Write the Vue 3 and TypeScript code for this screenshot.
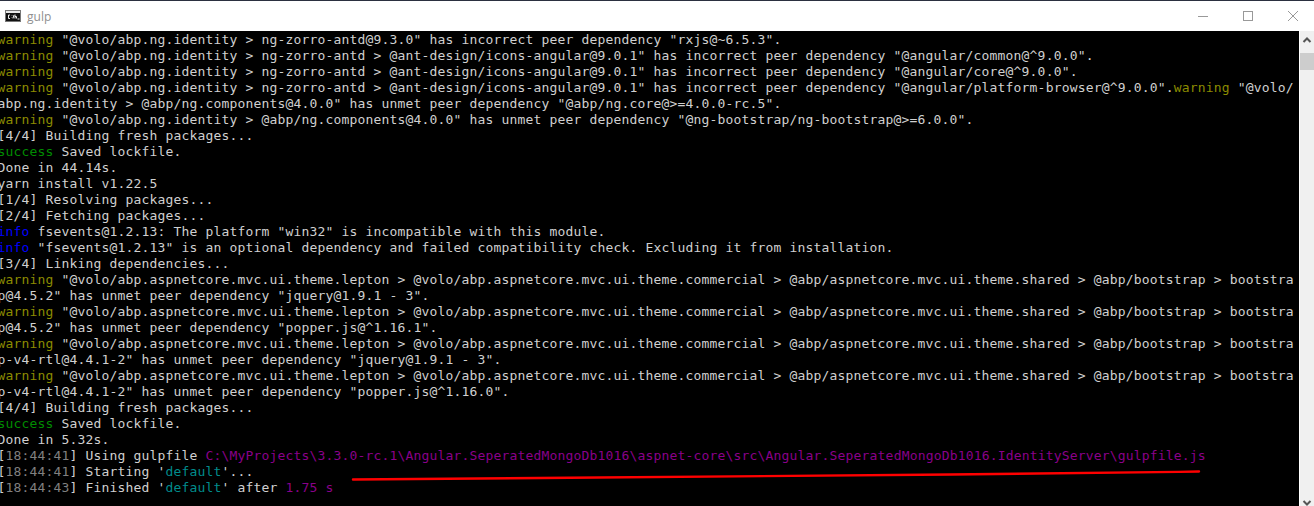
<script setup lang="ts">
type Seg = [string, string?]
const W = 'warn', P = 'purple', T = 'teal', G = 'green', B = 'blue', D = 'dim'
const w = (rest: string): Seg[] => [['warning', W], [' ' + rest]]
const lep = ' "@volo/abp.aspnetcore.mvc.ui.theme.lepton > @volo/abp.aspnetcore.mvc.ui.theme.commercial > @abp/aspnetcore.mvc.ui.theme.shared > @abp/bootstrap > bootstra'
const time = (t: string): Seg[] => [['['], [t, D], [']']]
const lines: Seg[][] = [
  w('"@volo/abp.ng.identity > ng-zorro-antd@9.3.0" has incorrect peer dependency "rxjs@~6.5.3".'),
  w('"@volo/abp.ng.identity > ng-zorro-antd > @ant-design/icons-angular@9.0.1" has incorrect peer dependency "@angular/common@^9.0.0".'),
  w('"@volo/abp.ng.identity > ng-zorro-antd > @ant-design/icons-angular@9.0.1" has incorrect peer dependency "@angular/core@^9.0.0".'),
  [['warning', W], [' "@volo/abp.ng.identity > ng-zorro-antd > @ant-design/icons-angular@9.0.1" has incorrect peer dependency "@angular/platform-browser@^9.0.0".'], ['warning', W], [' "@volo/']],
  [['abp.ng.identity > @abp/ng.components@4.0.0" has unmet peer dependency "@abp/ng.core@>=4.0.0-rc.5".']],
  w('"@volo/abp.ng.identity > @abp/ng.components@4.0.0" has unmet peer dependency "@ng-bootstrap/ng-bootstrap@>=6.0.0".'),
  [['[4/4] Building fresh packages...']],
  [['success', G], [' Saved lockfile.']],
  [['Done in 44.14s.']],
  [['yarn install v1.22.5']],
  [['[1/4] Resolving packages...']],
  [['[2/4] Fetching packages...']],
  [['info', B], [' fsevents@1.2.13: The platform "win32" is incompatible with this module.']],
  [['info', B], [' "fsevents@1.2.13" is an optional dependency and failed compatibility check. Excluding it from installation.']],
  [['[3/4] Linking dependencies...']],
  [['warning', W], [lep]],
  [['p@4.5.2" has unmet peer dependency "jquery@1.9.1 - 3".']],
  [['warning', W], [lep]],
  [['p@4.5.2" has unmet peer dependency "popper.js@^1.16.1".']],
  [['warning', W], [lep]],
  [['p-v4-rtl@4.4.1-2" has unmet peer dependency "jquery@1.9.1 - 3".']],
  [['warning', W], [lep]],
  [['p-v4-rtl@4.4.1-2" has unmet peer dependency "popper.js@^1.16.0".']],
  [['[4/4] Building fresh packages...']],
  [['success', G], [' Saved lockfile.']],
  [['Done in 5.32s.']],
  [...time('18:44:41'), [' Using gulpfile '], ['C:\\MyProjects\\3.3.0-rc.1\\Angular.SeperatedMongoDb1016\\aspnet-core\\src\\Angular.SeperatedMongoDb1016.IdentityServer\\gulpfile.js', P]],
  [...time('18:44:41'), [" Starting '"], ['default', T], ["'..."]],
  [...time('18:44:43'), [" Finished '"], ['default', T], ["' after "], ['1.75 s', P]],
]
</script>

<template>
  <div class="window">
    <header class="titlebar">
      <svg class="app-icon" width="16" height="12" viewBox="0 0 16 12">
        <rect x="0.5" y="0.5" width="15" height="11" fill="#111" stroke="#777" />
        <rect x="1" y="1" width="14" height="2" fill="#e8e8e8" />
        <path d="M5 5H3.5V8.5H5M7 5.5V6M7 7.5V8M9 5L8 8.5M10 4.5V8.5M10 6.5H11.5V8.5M12.5 9H14.5" stroke="#eee" fill="none" />
      </svg>
      <span class="title">gulp</span>
      <div class="controls">
        <svg width="12" height="12" viewBox="0 0 12 12"><path d="M1 6.5H11" stroke="#999" /></svg>
        <svg width="12" height="12" viewBox="0 0 12 12"><rect x="1.5" y="1.5" width="9" height="9" fill="none" stroke="#999" /></svg>
        <svg width="12" height="12" viewBox="0 0 12 12"><path d="M1 1L11 11M11 1L1 11" stroke="#999" /></svg>
      </div>
    </header>
    <main class="body">
      <div class="console">
        <div v-for="(line, i) in lines" :key="i" class="line"><span v-for="(seg, j) in line" :key="j" :class="seg[1]">{{ seg[0] }}</span></div>
        <svg class="mark" width="860" height="14" viewBox="0 0 860 14">
          <path d="M2 11.5C200 10 420 8 600 6.5S800 4.5 848 3.5" stroke="#f00" stroke-width="2.4" stroke-linecap="round" fill="none" />
        </svg>
      </div>
      <aside class="scrollbar">
        <svg class="arrow" width="14" height="22" viewBox="0 0 14 22"><path d="M3.5 11L7 7.5L10.5 11" stroke="#555" stroke-width="2" fill="none" /></svg>
        <div class="thumb"></div>
        <div class="track"></div>
        <svg class="arrow" width="14" height="22" viewBox="0 0 14 22"><path d="M3.5 17L7 20.5L10.5 17" stroke="#555" stroke-width="2" fill="none" /></svg>
      </aside>
    </main>
  </div>
</template>

<style>
html, body { margin: 0; background: #000; }
</style>

<style scoped>
.window { width: 1314px; height: 506px; display: flex; flex-direction: column; overflow: hidden; background: #fff; }
.titlebar { box-sizing: border-box; height: 31px; flex: none; display: flex; align-items: center; border-top: 1px solid #2b3040; padding-left: 5px; background: #fff; }
.app-icon { margin-right: 6px; }
.title { font: 12px "Open Sans", sans-serif; color: #8f8f8f; }
.controls { margin-left: auto; display: flex; gap: 33px; padding-right: 15px; margin-top: -1px; }
.body { flex: 1; display: flex; min-height: 0; }
.console { position: relative; flex: 1; padding-top: 1px; background: #000; overflow: hidden; color: #d0d0d0; font: 13px/16px "DejaVu Sans Mono", monospace; letter-spacing: 0.175px; white-space: pre; }
.line { height: 16px; margin-left: -2.6px; }
.warn { color: #8c8c00; }
.green { color: #008c00; }
.blue { color: #0000ff; }
.purple { color: #8a008a; }
.teal { color: #008c8c; }
.dim { color: #808080; }
.mark { position: absolute; left: 351px; top: 437px; }
.scrollbar { width: 14px; flex: none; display: flex; flex-direction: column; background: #f0f0f0; border-left: 1px solid #fff; }
.arrow { flex: none; }
.thumb { flex: none; height: 17px; background: #cdcdcd; }
.track { flex: 1; }
</style>
